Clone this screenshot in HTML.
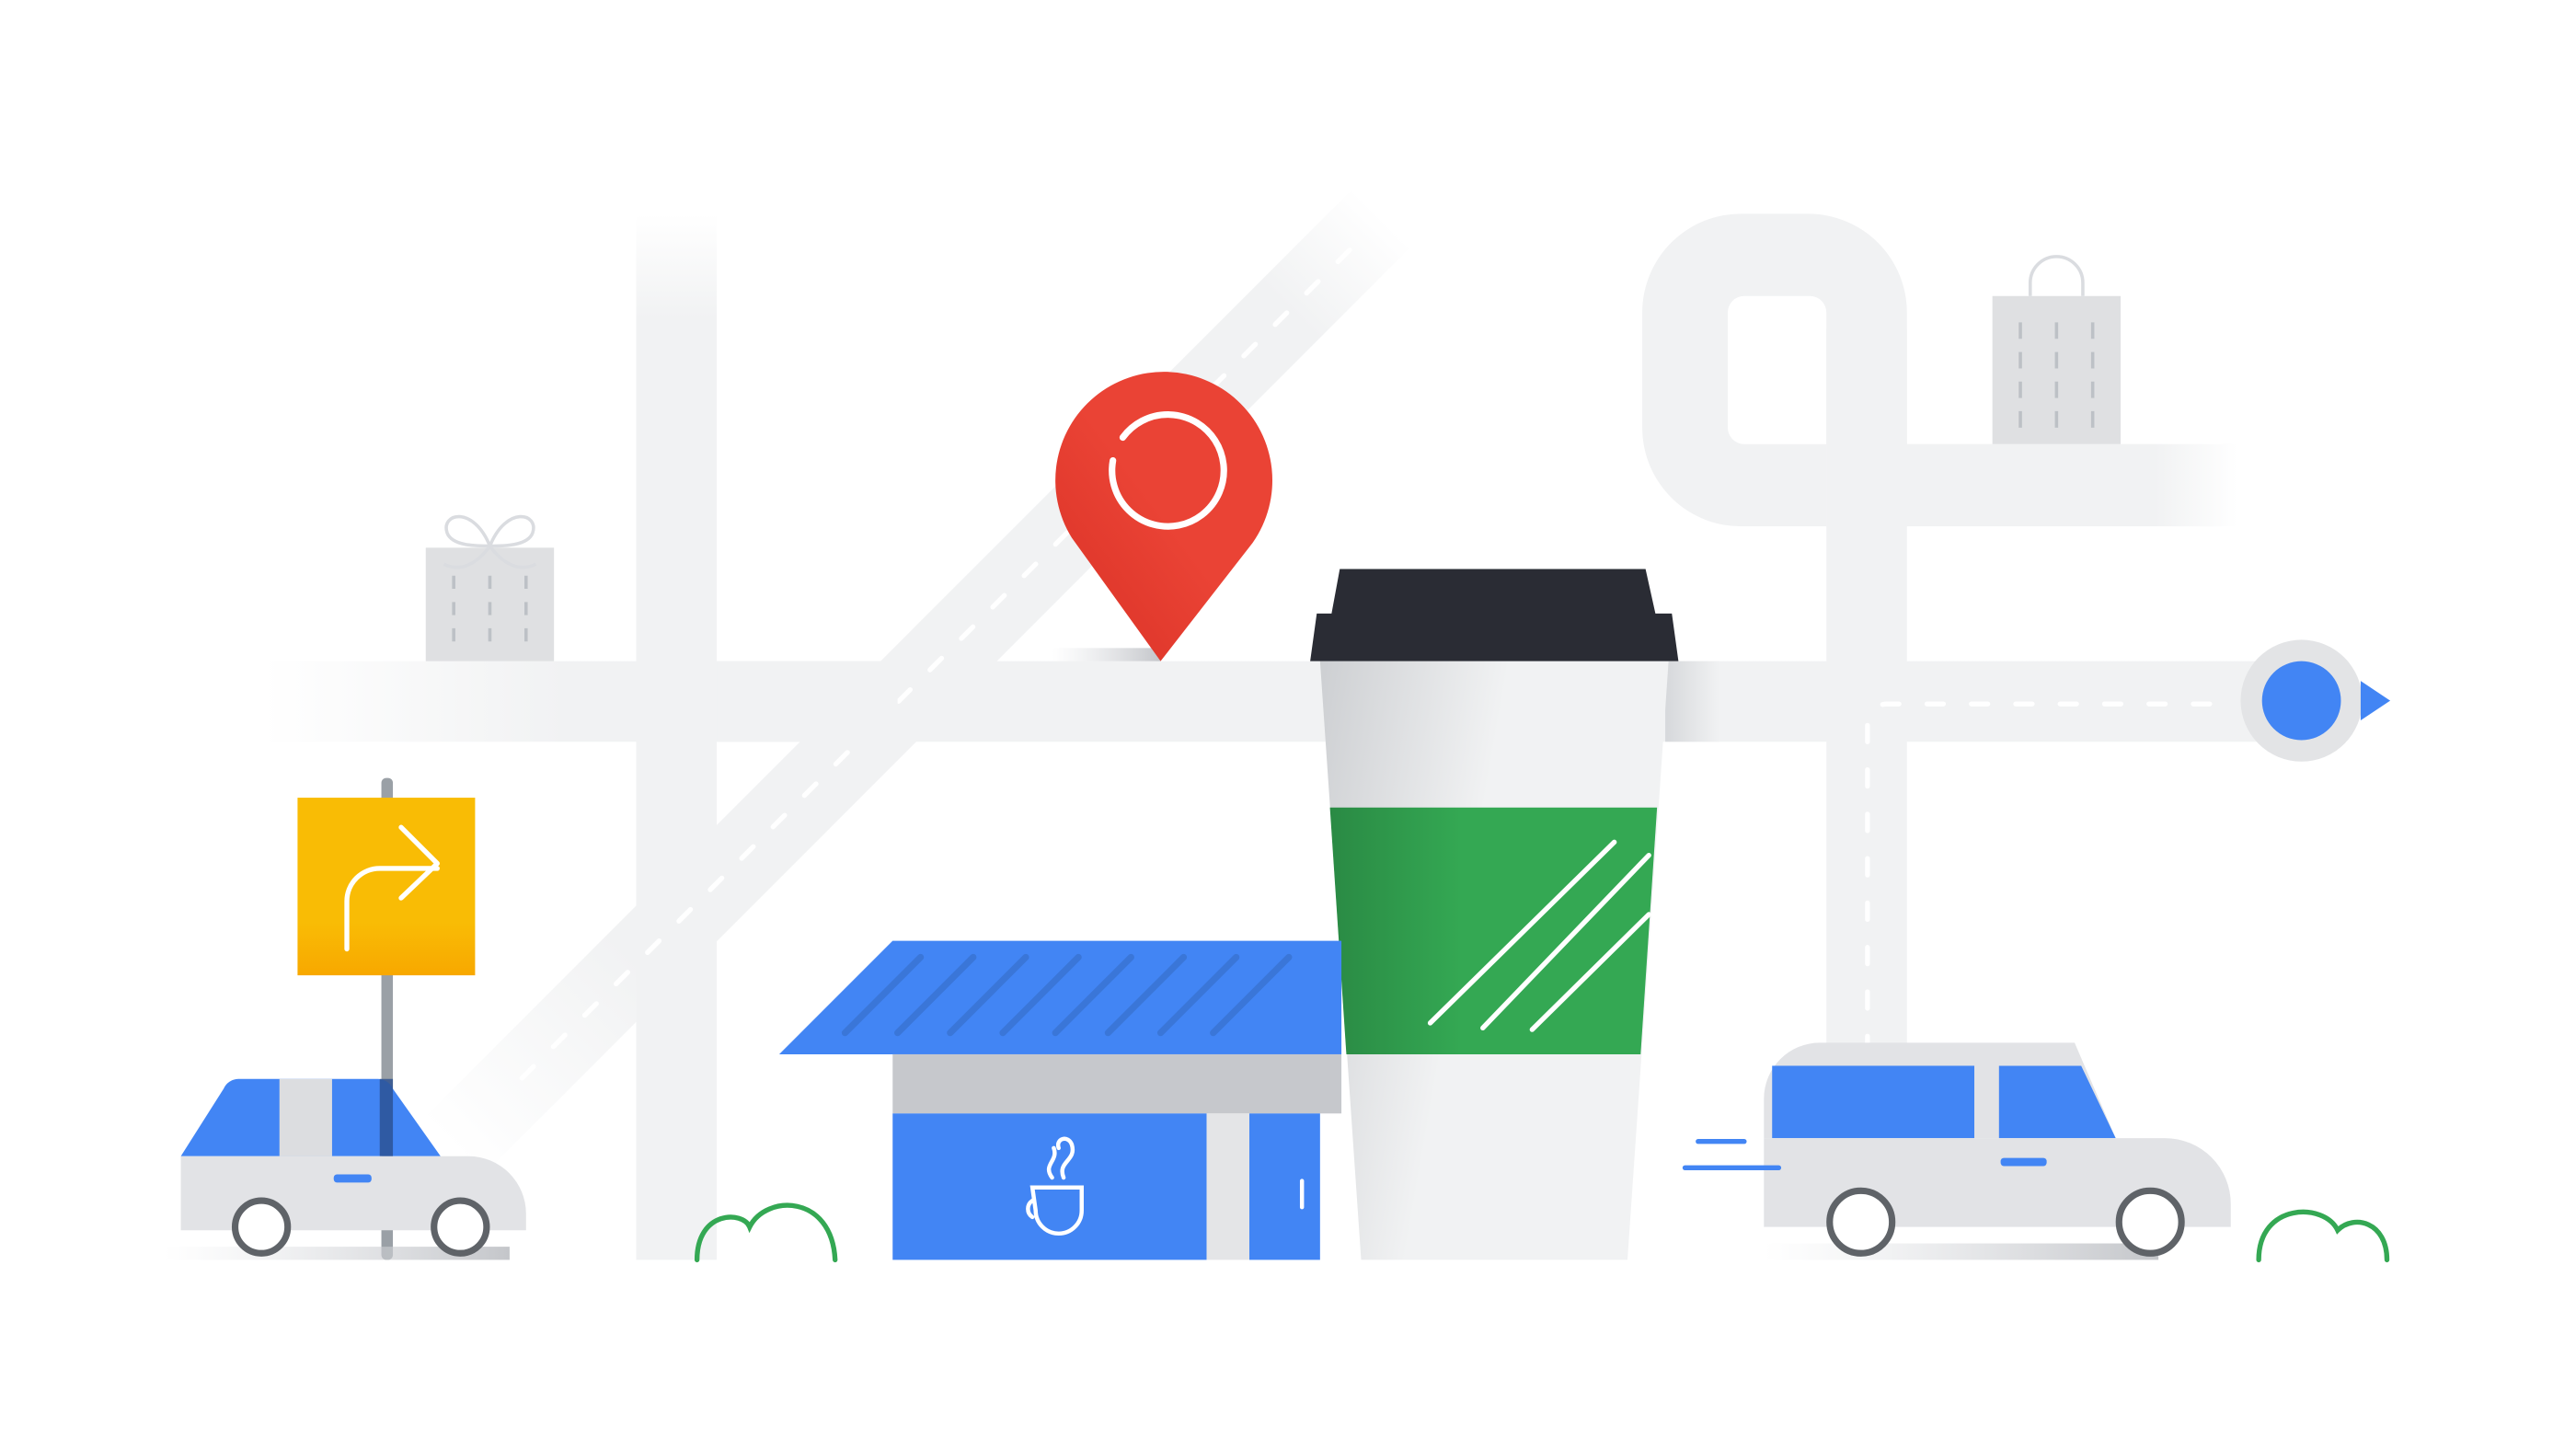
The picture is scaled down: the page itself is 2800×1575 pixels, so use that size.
<!DOCTYPE html>
<html><head><meta charset="utf-8"><style>
html,body{margin:0;padding:0;background:#fff;width:2800px;height:1575px;overflow:hidden}
svg{display:block}
</style></head><body>
<svg width="2800" height="1575" viewBox="0 0 1567 881" preserveAspectRatio="none" xmlns="http://www.w3.org/2000/svg">
<defs>
<linearGradient id="fadeL" x1="0" x2="1"><stop offset="0" stop-color="#f1f2f3" stop-opacity="0"/><stop offset="0.15" stop-color="#f1f2f3"/></linearGradient>
<linearGradient id="fadeT" x1="0" y1="0" x2="0" y2="1"><stop offset="0" stop-color="#f1f2f3" stop-opacity="0"/><stop offset="0.1" stop-color="#f1f2f3"/></linearGradient>
<linearGradient id="fadeR" x1="0" x2="1"><stop offset="0.8" stop-color="#f1f2f3"/><stop offset="1" stop-color="#f1f2f3" stop-opacity="0"/></linearGradient>
<linearGradient id="diag" x1="0" x2="1"><stop offset="0" stop-color="#f1f2f3" stop-opacity="0"/><stop offset="0.2" stop-color="#f1f2f3"/><stop offset="0.9" stop-color="#f1f2f3"/><stop offset="1" stop-color="#f1f2f3" stop-opacity="0"/></linearGradient>
<linearGradient id="cupG" x1="0" x2="1" y1="0" y2="0.3"><stop offset="0" stop-color="#cdcfd2"/><stop offset="0.5" stop-color="#f1f2f3"/></linearGradient>
<linearGradient id="grnG" x1="0" x2="1"><stop offset="0" stop-color="#2a8a44"/><stop offset="0.4" stop-color="#34a853"/></linearGradient>
<linearGradient id="sgnG" x1="0" y1="0" x2="0" y2="1"><stop offset="0.7" stop-color="#f9bc05"/><stop offset="1" stop-color="#f8a800"/></linearGradient>
<linearGradient id="pinG" x1="0" y1="1" x2="1" y2="0"><stop offset="0" stop-color="#d93025"/><stop offset="0.5" stop-color="#ea4335"/></linearGradient>
<linearGradient id="shd" x1="0" x2="1"><stop offset="0" stop-color="#dadce0" stop-opacity="0"/><stop offset="1" stop-color="#c4c6ca"/></linearGradient>
<linearGradient id="shdR" x1="0" x2="1"><stop offset="0" stop-color="#d6d8db"/><stop offset="1" stop-color="#f1f2f3"/></linearGradient>
</defs>
<rect x="387" y="130" width="49" height="636" fill="url(#fadeT)"/>
<rect x="160" y="402" width="1220" height="49" fill="url(#fadeL)"/>
<rect x="1111" y="200" width="49" height="440" fill="#f1f2f3"/>
<path d="M1060 130 h40 a60 60 0 0 1 60 60 v80 h-49 v-80 a10 10 0 0 0 -10 -10 h-40 a10 10 0 0 0 -10 10 v70 a10 10 0 0 0 10 10 h50 v50 h-50 a60 60 0 0 1 -62 -60 v-70 a60 60 0 0 1 61 -60z" fill="#f1f2f3"/>
<rect x="1111" y="270" width="250" height="50" fill="url(#fadeR)"/>
<g transform="translate(565,408) rotate(-45)"><rect x="-410" y="-25" width="800" height="50" fill="url(#diag)"/>
<line x1="-350" y1="0" x2="370" y2="0" stroke="#fff" stroke-width="3" stroke-dasharray="10 17" stroke-linecap="round"/></g>
<rect x="436" y="402" width="110" height="49" fill="#f1f2f3"/>
<path d="M1136 640 V440 a12 12 0 0 1 12 -12 H1360" fill="none" stroke="#fff" stroke-width="3" stroke-dasharray="10 17" stroke-linecap="round"/>
<rect x="259" y="333" width="78" height="69" fill="#dfe0e2"/>
<g stroke="#bdc1c6" stroke-width="2"><line x1="276" y1="350" x2="276" y2="390" stroke-dasharray="8 8"/><line x1="298" y1="350" x2="298" y2="390" stroke-dasharray="8 8"/><line x1="320" y1="350" x2="320" y2="390" stroke-dasharray="8 8"/></g>
<path d="M298 332 c-10-25 -30-20 -26-8 c3 8 18 8 26 8 c8 0 23 0 26-8 c4-12 -16-17 -26 8 M270 343 c10 5 20 0 28-11 c8 11 18 16 28 11" fill="none" stroke="#dadce0" stroke-width="2"/>
<rect x="1212" y="180" width="78" height="90" fill="#dfe0e2"/>
<path d="M1235 180 v-8 a16 16 0 0 1 32 0 v8" fill="none" stroke="#dadce0" stroke-width="2"/>
<g stroke="#bdc1c6" stroke-width="2" stroke-dasharray="10 8"><line x1="1229" y1="196" x2="1229" y2="262"/><line x1="1251" y1="196" x2="1251" y2="262"/><line x1="1273" y1="196" x2="1273" y2="262"/></g>
<rect x="640" y="394" width="66" height="8" fill="url(#shd)"/>
<path d="M706 402 L652 327 A66 66 0 1 1 762 330 Z" fill="url(#pinG)"/>
<path d="M683 266 A34 34 0 1 1 677 280" fill="none" stroke="#fff" stroke-width="4" stroke-linecap="round"/>
<rect x="1013" y="402" width="33" height="49" fill="url(#shdR)"/>
<path d="M803 402 H1015 L990 766 H828 Z" fill="url(#cupG)"/>
<path d="M809 491 H1008 L998 641 H819 Z" fill="url(#grnG)"/>
<g stroke="#fff" stroke-width="3" stroke-linecap="round"><line x1="870" y1="622" x2="982" y2="512"/><line x1="902" y1="625" x2="1003" y2="520"/><line x1="932" y1="626" x2="1003" y2="556"/></g>
<path d="M815 346 H1001 L1007 373 H1017 L1021 402 H797 L801 373 H810 Z" fill="#2a2c34"/>
<path d="M474 641 L543 572 H816 V641 Z" fill="#4285f4"/>
<g stroke="#3a76d8" stroke-width="4" stroke-linecap="round"><line x1="514" y1="628" x2="560" y2="582"/><line x1="546" y1="628" x2="592" y2="582"/><line x1="578" y1="628" x2="624" y2="582"/><line x1="610" y1="628" x2="656" y2="582"/><line x1="642" y1="628" x2="688" y2="582"/><line x1="674" y1="628" x2="720" y2="582"/><line x1="706" y1="628" x2="752" y2="582"/><line x1="738" y1="628" x2="784" y2="582"/></g>
<rect x="543" y="641" width="273" height="36" fill="#c6c8cc"/>
<rect x="543" y="677" width="191" height="89" fill="#4285f4"/>
<rect x="734" y="677" width="26" height="89" fill="#e4e5e7"/>
<rect x="760" y="677" width="43" height="89" fill="#4285f4"/>
<line x1="792" y1="718" x2="792" y2="734" stroke="#fff" stroke-width="2.5" stroke-linecap="round"/>
<path d="M628 722 h30 v14 a14 14 0 0 1 -28 0 z M628 730 a6 6 0 0 0 0 10 M640 716 c-6-8 4-10 1-18 M647 716 c-4-10 8-10 5-20 c-2-6 -10-4 -8 2" fill="none" stroke="#fff" stroke-width="2.5" stroke-linecap="round"/>
<path d="M424 766 c0-30 28-30 32-20 c10-20 50-20 52 20" fill="none" stroke="#34a853" stroke-width="3" stroke-linecap="round"/>
<path d="M1374 766 c0-35 40-35 48-18 c10-10 30-5 30 18" fill="none" stroke="#34a853" stroke-width="3" stroke-linecap="round"/>
<rect x="232" y="473" width="7" height="293" rx="3" fill="#9aa0a6"/>
<rect x="181" y="485" width="108" height="108" fill="url(#sgnG)"/>
<path d="M211 577 V548 a20 20 0 0 1 20 -20 H266 M244 503 L266 525 L244 546" fill="none" stroke="#fff" stroke-width="3" stroke-linecap="round" stroke-linejoin="round"/>
<rect x="100" y="758" width="210" height="8" fill="url(#shd)"/>
<path d="M110 703 L136 662 a10 10 0 0 1 9 -6 H230 a10 10 0 0 1 9 6 L268 703 Z" fill="#4285f4"/>
<rect x="170" y="656" width="32" height="47" fill="#dcdde0"/>
<rect x="231" y="656" width="8" height="47" fill="#2a4f8f" opacity="0.8"/>
<path d="M110 703 H285 a35 35 0 0 1 35 35 v10 H110 Z" fill="#e2e3e6"/>
<rect x="203" y="714" width="23" height="5" rx="2" fill="#4285f4"/>
<g fill="#fff" stroke="#5f6368" stroke-width="4"><circle cx="159" cy="746" r="16"/><circle cx="280" cy="746" r="16"/></g>
<rect x="1073" y="756" width="240" height="10" fill="url(#shd)"/>
<path d="M1073 692 V668 a34 34 0 0 1 34 -34 H1262 L1287 692 Z" fill="#e2e3e6"/>
<rect x="1078" y="648" width="123" height="44" fill="#4285f4"/>
<path d="M1216 648 H1266 L1287 692 H1216 Z" fill="#4285f4"/>
<path d="M1073 692 H1317 a40 40 0 0 1 40 40 v14 H1073 Z" fill="#e2e3e6"/>
<rect x="1217" y="704" width="28" height="5" rx="2" fill="#4285f4"/>
<g fill="#fff" stroke="#5f6368" stroke-width="4"><circle cx="1132" cy="743" r="19"/><circle cx="1308" cy="743" r="19"/></g>
<g stroke="#4285f4" stroke-width="3" stroke-linecap="round"><line x1="1033" y1="694" x2="1061" y2="694"/><line x1="1025" y1="710" x2="1082" y2="710"/></g>
<circle cx="1400" cy="426" r="37" fill="#e3e4e6"/>
<circle cx="1400" cy="426" r="24" fill="#4285f4"/>
<path d="M1436 414 L1454 426 L1436 438 Z" fill="#4285f4"/>
</svg>
</body></html>
